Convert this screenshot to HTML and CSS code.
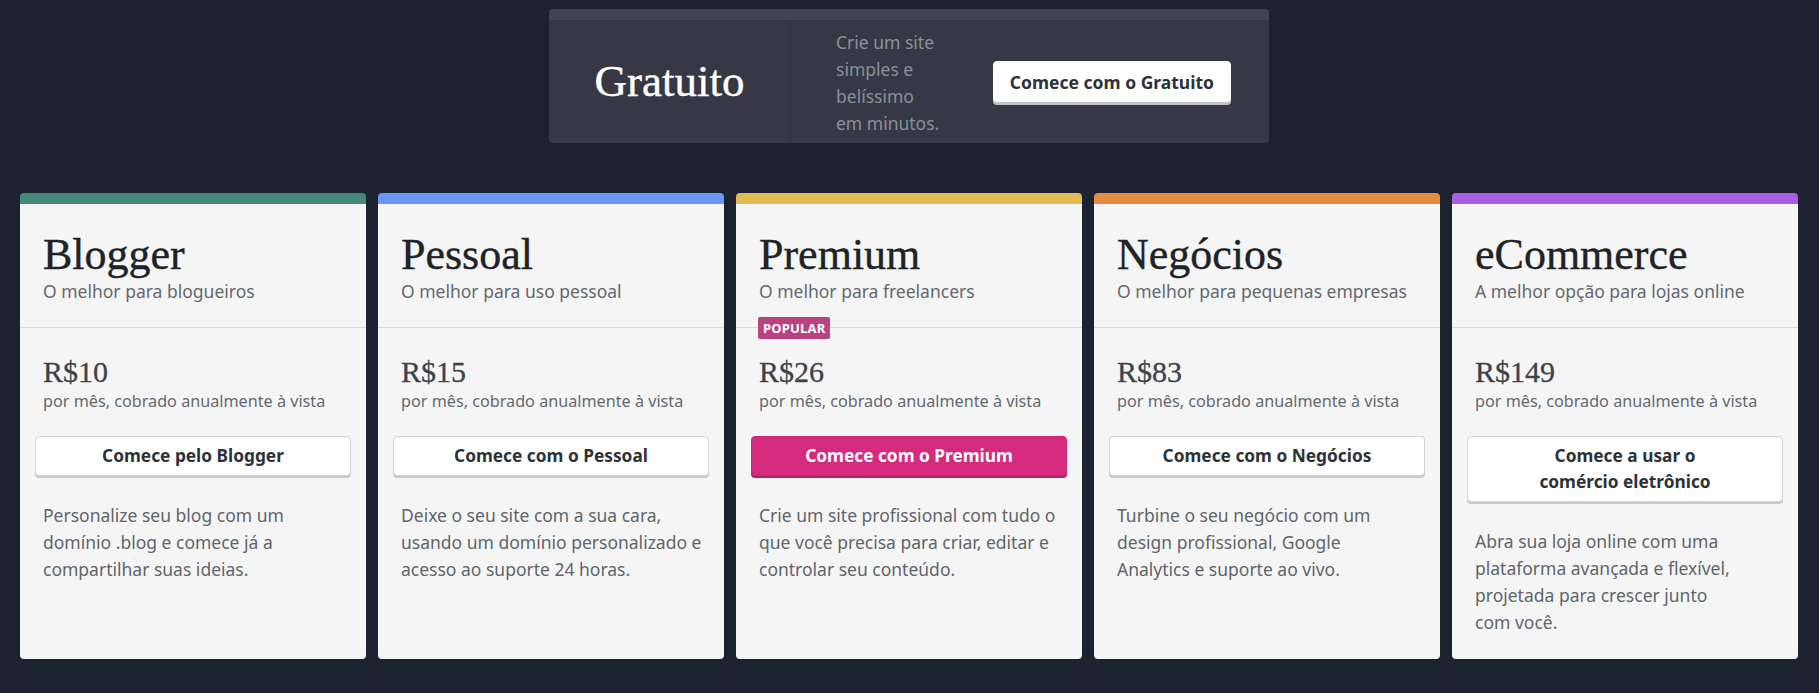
FILE: index.html
```html
<!DOCTYPE html>
<html lang="pt-BR">
<head>
<meta charset="utf-8">
<title>Planos</title>
<link rel="stylesheet" href="styles.css">
</head>
<body>
<main class="page">
  <section class="free">
    <div class="free-name">Gratuito</div>
    <div class="free-body">
      <p class="free-desc">Crie um site<br>simples e<br>belíssimo<br>em minutos.</p>
      <a class="btn btn-free" href="#">Comece com o Gratuito</a>
    </div>
  </section>

  <section class="plans">
    <article class="card card-blogger">
      <header class="card-head">
        <h2 class="card-title">Blogger</h2>
        <p class="card-sub">O melhor para blogueiros</p>
      </header>
      <div class="card-body">
        <div class="price">R$10</div>
        <div class="period">por mês, cobrado anualmente à vista</div>
        <a class="btn" href="#">Comece pelo Blogger</a>
        <p class="desc">Personalize seu blog com um<br>domínio .blog e comece já a<br>compartilhar suas ideias.</p>
      </div>
    </article>

    <article class="card card-pessoal">
      <header class="card-head">
        <h2 class="card-title">Pessoal</h2>
        <p class="card-sub">O melhor para uso pessoal</p>
      </header>
      <div class="card-body">
        <div class="price">R$15</div>
        <div class="period">por mês, cobrado anualmente à vista</div>
        <a class="btn" href="#">Comece com o Pessoal</a>
        <p class="desc">Deixe o seu site com a sua cara,<br>usando um domínio personalizado e<br>acesso ao suporte 24 horas.</p>
      </div>
    </article>

    <article class="card card-premium">
      <header class="card-head">
        <h2 class="card-title">Premium</h2>
        <p class="card-sub">O melhor para freelancers</p>
        <span class="badge">Popular</span>
      </header>
      <div class="card-body">
        <div class="price">R$26</div>
        <div class="period">por mês, cobrado anualmente à vista</div>
        <a class="btn btn-primary" href="#">Comece com o Premium</a>
        <p class="desc">Crie um site profissional com tudo o<br>que você precisa para criar, editar e<br>controlar seu conteúdo.</p>
      </div>
    </article>

    <article class="card card-negocios">
      <header class="card-head">
        <h2 class="card-title">Negócios</h2>
        <p class="card-sub">O melhor para pequenas empresas</p>
      </header>
      <div class="card-body">
        <div class="price">R$83</div>
        <div class="period">por mês, cobrado anualmente à vista</div>
        <a class="btn" href="#">Comece com o Negócios</a>
        <p class="desc">Turbine o seu negócio com um<br>design profissional, Google<br>Analytics e suporte ao vivo.</p>
      </div>
    </article>

    <article class="card card-ecommerce">
      <header class="card-head">
        <h2 class="card-title">eCommerce</h2>
        <p class="card-sub">A melhor opção para lojas online</p>
      </header>
      <div class="card-body">
        <div class="price">R$149</div>
        <div class="period">por mês, cobrado anualmente à vista</div>
        <a class="btn" href="#">Comece a usar o<br>comércio eletrônico</a>
        <p class="desc">Abra sua loja online com uma<br>plataforma avançada e flexível,<br>projetada para crescer junto<br>com você.</p>
      </div>
    </article>
  </section>
</main>
</body>
</html>
```

FILE: styles.css
```css
* { box-sizing: border-box; }

html, body {
  margin: 0;
  padding: 0;
  background: #1d2230;
}

body {
  font-family: "Noto Sans", "Open Sans", sans-serif;
  color: #2c3338;
}

.page {
  padding: 9px 21px 0 20px;
}

/* ---------- Free plan banner ---------- */
.free {
  width: 720px;
  margin: 0 auto;
  display: flex;
  background: #363945;
  border-top: 11px solid #42454f;
  border-radius: 4px;
  height: 134px;
}

.free-name {
  width: 242px;
  flex: none;
  display: flex;
  align-items: center;
  justify-content: center;
  border-right: 1px solid #2f323c;
  font-family: "Liberation Serif", "Times New Roman", serif;
  font-size: 45px;
  line-height: 48px;
  color: #ffffff;
  -webkit-text-stroke: 0.4px #ffffff;
  padding-bottom: 2px;
}

.free-body {
  flex: 1;
  display: flex;
  align-items: center;
  justify-content: space-between;
  padding: 0 38px 0 45px;
}

.free-desc {
  margin: 0;
  font-size: 17.5px;
  line-height: 27px;
  color: #8c8f94;
  white-space: nowrap;
  padding-top: 3px;
}

/* ---------- Buttons ---------- */
.btn {
  display: block;
  text-align: center;
  text-decoration: none;
  font-weight: 700;
  font-size: 17.3px;
  line-height: 26px;
  padding: 6px 16px;
  color: #2c3338;
  background: #ffffff;
  border: 1px solid #d3d4d6;
  border-radius: 4px;
  box-shadow: 0 2px 0 #c9cacc;
}

.btn-free {
  padding: 7px 16px 6px;
  font-size: 17.5px;
  border-color: #ffffff;
  box-shadow: 0 3px 0 #c3c4c7;
}

.btn-primary {
  color: #ffffff;
  background: #d52b7f;
  border-color: #c8277a;
  box-shadow: 0 2px 0 #a8255f;
}

/* ---------- Plan cards ---------- */
.plans {
  margin-top: 50px;
  display: grid;
  grid-template-columns: repeat(5, 1fr);
  gap: 12px;
}

.card {
  background: #f5f5f5;
  border-radius: 4px;
  border-top: 11px solid #438a7a;
  display: flex;
  flex-direction: column;
}

.card-blogger { border-top-color: #438a7a; }
.card-pessoal { border-top-color: #6b98f7; }
.card-premium { border-top-color: #e1bc55; }
.card-negocios { border-top-color: #e78b41; }
.card-ecommerce { border-top-color: #a75fe4; }

.card-head {
  position: relative;
  padding: 27px 23px 24px;
  border-bottom: 1px solid #dcdcde;
}

.card-title {
  margin: 0;
  font-family: "Liberation Serif", "Times New Roman", serif;
  font-weight: 400;
  font-size: 44px;
  line-height: 48px;
  color: #1d2327;
  -webkit-text-stroke: 0.4px #1d2327;
}

.card-sub {
  margin: 0;
  font-size: 17.5px;
  line-height: 24px;
  color: #646970;
}

.badge {
  position: absolute;
  left: 22px;
  bottom: -12px;
  height: 22px;
  padding: 0 5px;
  border-radius: 2px;
  background: #bb4281;
  color: #ffffff;
  font-size: 13px;
  font-weight: 700;
  line-height: 22px;
  text-transform: uppercase;
  letter-spacing: 0.2px;
}

.card-body {
  padding: 25px 15px 23px;
}

.price {
  padding: 0 8px;
  font-family: "Liberation Serif", "Times New Roman", serif;
  font-size: 30px;
  line-height: 38px;
  color: #3c434a;
  -webkit-text-stroke: 0.3px #3c434a;
}

.period {
  padding: 0 8px;
  font-size: 16.2px;
  line-height: 20px;
  color: #646970;
}

.card-body .btn {
  margin-top: 25px;
}

.desc {
  margin: 26px 0 0;
  padding: 0 0 0 8px;
  font-size: 17.5px;
  line-height: 27px;
  color: #5f656b;
  white-space: nowrap;
}
```
